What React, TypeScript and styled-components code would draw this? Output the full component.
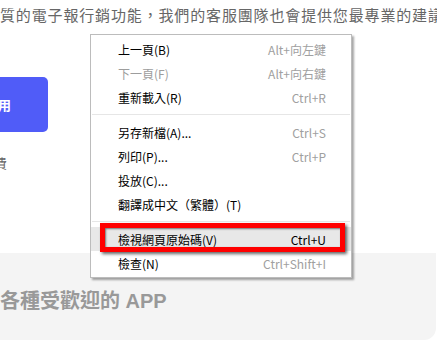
import styled, { createGlobalStyle } from "styled-components";

const GlobalStyle = createGlobalStyle`
  html, body {
    margin: 0;
    padding: 0;
    background: #fff;
    overflow: hidden;
  }
  body {
    font-family: "Noto Sans", "Noto Sans CJK TC", sans-serif;
  }
`;

const Page = styled.div`
  position: relative;
  width: 437px;
  height: 342px;
  overflow: hidden;
`;

const Intro = styled.p`
  margin: 0;
  padding-top: 4px;
  height: 24px;
  font-size: 15px;
  line-height: 22px;
  letter-spacing: 0.85px;
  color: #666;
  white-space: nowrap;
  font-family: "Noto Sans CJK TC", sans-serif;
`;

const Actions = styled.div`
  display: flex;
  flex-direction: column;
  align-items: flex-start;
  margin-top: 49px;
  margin-left: -110px;
`;

const TryButton = styled.button`
  display: flex;
  align-items: center;
  justify-content: flex-end;
  width: 158px;
  height: 55px;
  padding: 0 37px 0 0;
  border: none;
  border-radius: 5px;
  background: #505cf8;
  color: #fff;
  font-size: 13px;
  font-weight: bold;
  font-family: "Noto Sans CJK TC", sans-serif;
`;

const Note = styled.span`
  margin-top: 21px;
  margin-left: 91px;
  font-size: 13px;
  color: #666;
  font-family: "Noto Sans CJK TC", sans-serif;
`;

const AppSection = styled.section`
  margin-top: 81px;
  margin-left: -20px;
  width: 456px;
  height: 87px;
  box-sizing: border-box;
  padding: 35px 0 0 20px;
  background: #f4f4f4;
  border-radius: 0 0 12px 0;
`;

const SectionTitle = styled.h2`
  margin: 0;
  font-size: 20px;
  line-height: 26px;
  font-weight: bold;
  color: #999;
  font-family: "Liberation Sans", "Noto Sans CJK TC", sans-serif;
`;

const Menu = styled.div`
  position: absolute;
  left: 90px;
  top: 34px;
  width: 262px;
  box-sizing: border-box;
  padding: 2px 0;
  background: #fff;
  border: 1px solid #bcbcbc;
  box-shadow: 2px 2px 2px rgba(0, 0, 0, 0.35);
  font-family: "Noto Sans CJK TC", sans-serif;
  font-size: 12px;
`;

const Item = styled.div<{ $disabled?: boolean; $active?: boolean }>`
  position: relative;
  display: flex;
  align-items: center;
  justify-content: space-between;
  height: 24px;
  padding: 0 25px 0 27px;
  color: ${(p) => (p.$disabled ? "#9d9d9d" : "#000")};
  background: ${(p) => (p.$active ? "#e8e8e8" : "transparent")};
`;

const Shortcut = styled.span<{ $active?: boolean }>`
  color: ${(p) => (p.$active ? "#000" : "#a0a0a0")};
`;

const Separator = styled.div`
  height: 1px;
  margin: 5px 1px;
  background: #e6e6e6;
`;

const Highlight = styled.div`
  position: absolute;
  left: 9px;
  right: 6px;
  top: -4px;
  bottom: -1px;
  border: 5px solid #f00;
  box-shadow: 2px 2px 3px rgba(0, 0, 0, 0.6), inset 1px 1px 2px rgba(0, 0, 0, 0.5);
  pointer-events: none;
`;

const items: (
  | { label: string; shortcut?: string; disabled?: boolean; active?: boolean }
  | "sep"
)[] = [
  { label: "上一頁(B)", shortcut: "Alt+向左鍵" },
  { label: "下一頁(F)", shortcut: "Alt+向右鍵", disabled: true },
  { label: "重新載入(R)", shortcut: "Ctrl+R" },
  "sep",
  { label: "另存新檔(A)...", shortcut: "Ctrl+S" },
  { label: "列印(P)...", shortcut: "Ctrl+P" },
  { label: "投放(C)..." },
  { label: "翻譯成中文（繁體）(T)" },
  "sep",
  { label: "檢視網頁原始碼(V)", shortcut: "Ctrl+U", active: true },
  { label: "檢查(N)", shortcut: "Ctrl+Shift+I" },
];

export default function App() {
  return (
    <Page>
      <GlobalStyle />
      <Intro>質的電子報行銷功能，我們的客服團隊也會提供您最專業的建議</Intro>
      <Actions>
        <TryButton>免費試用</TryButton>
        <Note>免費</Note>
      </Actions>
      <AppSection>
        <SectionTitle>各種受歡迎的 APP</SectionTitle>
      </AppSection>

      <Menu>
        {items.map((it, i) =>
          it === "sep" ? (
            <Separator key={i} />
          ) : (
            <Item key={i} $disabled={it.disabled} $active={it.active}>
              <span>{it.label}</span>
              {it.shortcut && <Shortcut $active={it.active}>{it.shortcut}</Shortcut>}
              {it.active && <Highlight />}
            </Item>
          )
        )}
      </Menu>
    </Page>
  );
}
